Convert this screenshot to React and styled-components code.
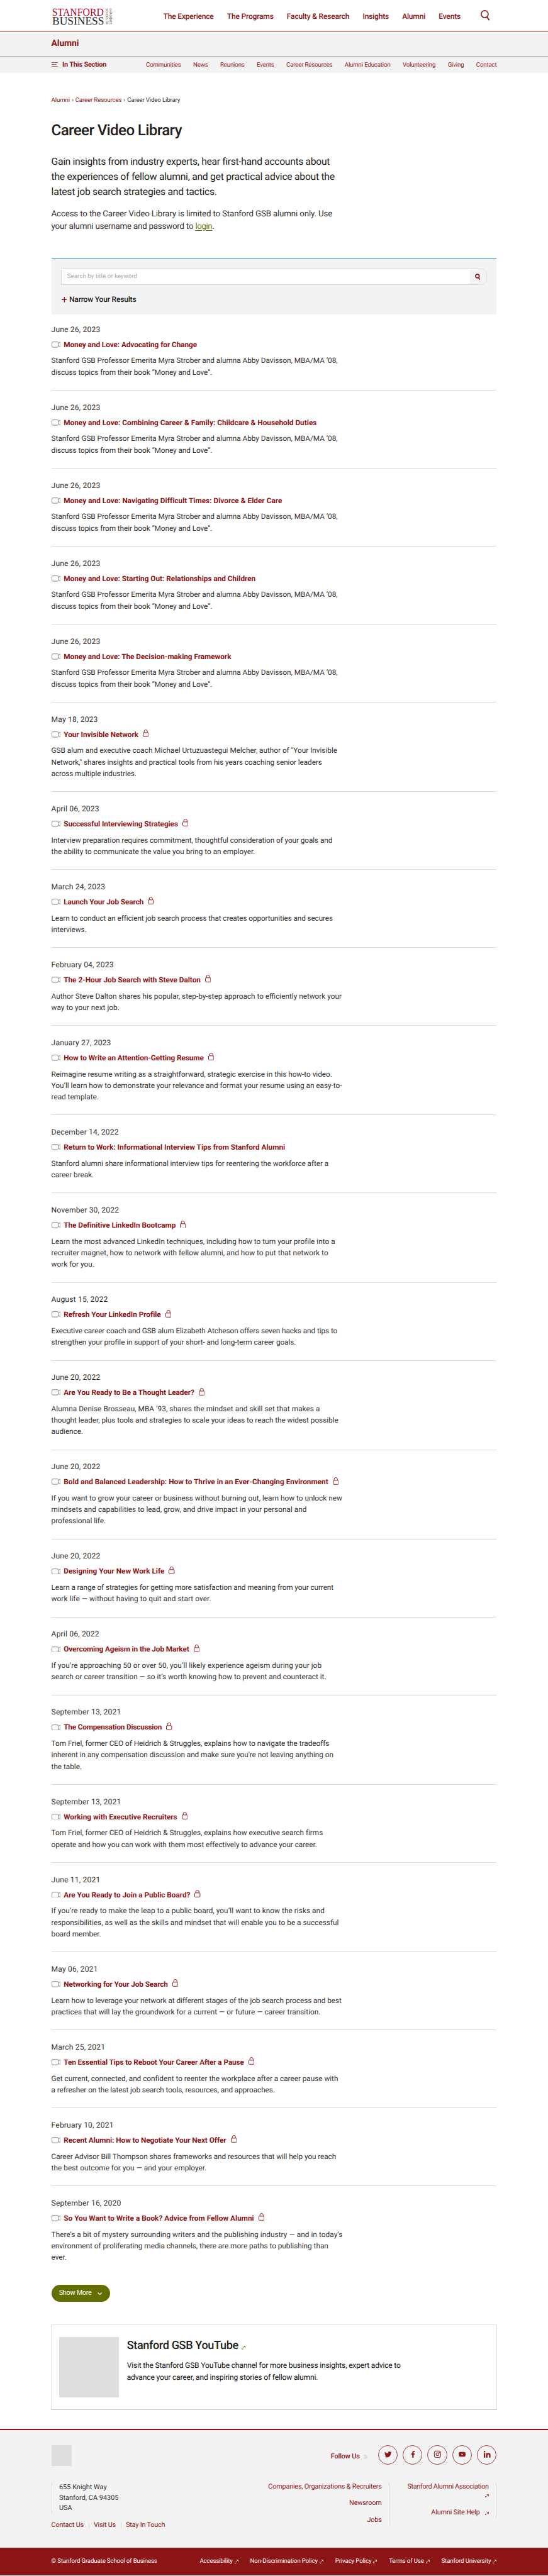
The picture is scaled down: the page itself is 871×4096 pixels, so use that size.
import React from "react";
import styled, { createGlobalStyle } from "styled-components";
import { FaTwitter, FaFacebookF, FaInstagram, FaYoutube, FaLinkedinIn } from "react-icons/fa";

const cardinal = "#8c1515";
const ink = "#231f20";
const softInk = "#343031";
const fog = "#f3f3f3";
const rule = "#dcdcdc";
const olive = "#626f00";

/* 1rem is ten design units; every measure below is written in rem. */
const GlobalStyle = createGlobalStyle`
  *, *::before, *::after { box-sizing: border-box; }
  html { font-size: 6.05px; }
  body {
    margin: 0;
    background: #fff;
    color: ${ink};
    font-family: Roboto, "Liberation Sans", Arial, sans-serif;
    font-size: 2rem;
    text-rendering: geometricPrecision;
    overflow-x: hidden;
  }
  h1, h2, h3, p, ul { margin: 0; padding: 0; font-weight: 400; }
  ul { list-style: none; }
  a { color: inherit; text-decoration: none; }
  svg { display: block; flex: none; }
`;

const Container = styled.div`
  width: 117rem;
  margin: 0 auto;
`;

/* ---------- header ---------- */

const Header = styled.header`
  height: 8.2rem;
  border-bottom: 1px solid ${cardinal};
`;

const HeaderRow = styled(Container)`
  display: flex;
  align-items: center;
  height: 100%;
  padding: 0.7rem 1.8rem 0 0.3rem;
`;

const Logo = styled.svg`
  width: 15.7rem;
  height: 4.4rem;
  overflow: visible;
`;

const MainNav = styled.nav`
  display: flex;
  gap: 3.5rem;
  margin-left: auto;
  color: ${cardinal};
  font-weight: 500;
  font-size: 2rem;
  letter-spacing: -0.018em;
  white-space: nowrap;
`;

const HeaderSearch = styled.svg`
  width: 2.4rem;
  height: 2.8rem;
  margin: -0.7rem 0 0 5.3rem;
`;

const SectionBand = styled.div`
  height: 6.9rem;
  background: ${fog};
  border-bottom: 1px solid #53565a;
`;

const SectionTitle = styled(Container)`
  display: flex;
  align-items: center;
  height: 100%;
  padding-bottom: 0.2rem;
  color: ${cardinal};
  font-weight: 700;
  font-size: 2.3rem;
  letter-spacing: -0.007em;
`;

const SubBar = styled.div`
  height: 4rem;
  background: ${fog};
`;

const SubBarRow = styled(Container)`
  display: flex;
  align-items: center;
  justify-content: space-between;
  height: 100%;
  color: ${cardinal};
`;

const InThisSection = styled.a`
  display: flex;
  align-items: center;
  gap: 1.1rem;
  padding: 0 0 0.2rem 0.15rem;
  font-weight: 700;
  font-size: 1.8rem;
  letter-spacing: -0.016em;
`;

const MenuIcon = styled.svg`
  width: 1.65rem;
  height: 1.2rem;
`;

const SubNav = styled.nav`
  display: flex;
  gap: 3.2rem;
  font-size: 1.6rem;
  letter-spacing: -0.017em;
  white-space: nowrap;
`;

/* ---------- intro ---------- */

const Main = styled(Container).attrs({ as: "main" })`
  padding-top: 6.15rem;
`;

const Breadcrumb = styled.div`
  display: flex;
  gap: 0.5rem;
  font-size: 1.6rem;
  line-height: 2.4rem;
  letter-spacing: -0.015em;
  color: ${softInk};
  a { color: ${cardinal}; }
`;

const PageTitle = styled.h1`
  margin-top: 4.27rem;
  font-weight: 500;
  font-size: 4rem;
  line-height: 4.8rem;
  letter-spacing: -0.027em;
`;

/* A line of running text with its own tracking. */
const Line = styled.span`
  display: block;
  white-space: nowrap;
  letter-spacing: ${({ $t }) => $t / 1000}em;
`;

const Lead = styled.p`
  margin-top: 3.81rem;
  font-size: 2.6rem;
  line-height: 3.96rem;
`;

const Access = styled.p`
  margin-top: 2.38rem;
  font-size: 2.2rem;
  line-height: 3.22rem;
  color: ${softInk};
`;

const LoginLink = styled.a`
  color: #6b7a10;
  text-decoration: underline;
  text-decoration-color: ${olive};
  text-decoration-thickness: 1px;
  text-underline-offset: 0.25rem;
  letter-spacing: -0.03em;
`;

/* ---------- search panel ---------- */

const SearchPanel = styled.section`
  height: 14.9rem;
  margin-top: 6.57rem;
  padding: 2.6rem;
  background: ${fog};
  border-top: 1px solid #2a84a5;
`;

const SearchField = styled.div`
  display: flex;
  height: 4.4rem;
  border: 1px solid #dadad8;
  border-radius: 0 1.6rem 1.6rem 0;
  overflow: hidden;
  background: #fff;
`;

const Placeholder = styled.div`
  flex: 1;
  display: flex;
  align-items: center;
  padding: 0 0 0.1rem 1.4rem;
  color: #a9a9a9;
  font-size: 1.6rem;
  letter-spacing: 0.005em;
`;

const SearchButton = styled.button`
  display: flex;
  align-items: center;
  width: 4.3rem;
  padding: 0 0 0 1.3rem;
  border: 0;
  background: ${fog};
  svg { width: 1.4rem; height: 1.7rem; }
`;

const Narrow = styled.h2`
  display: flex;
  align-items: center;
  gap: 0.6rem;
  margin-top: 2.62rem;
  font-weight: 500;
  font-size: 2rem;
  line-height: 2.4rem;
  letter-spacing: -0.018em;
  svg { width: 1.45rem; height: 1.45rem; margin-left: 0.05rem; }
`;

/* ---------- video list ---------- */

const VideoList = styled.ul`
  margin-top: 2.37rem;
`;

const VideoItem = styled.li`
  display: flex;
  flex-direction: column;
  padding: 2.88rem 0 calc(3.38rem - 1px);
  border-bottom: 1px solid ${rule};
  color: ${softInk};
  &:first-child { padding-top: 0; }
  &:last-child { border-bottom-color: transparent; }
`;

const VideoDate = styled.span`
  line-height: 3rem;
  letter-spacing: 0.014em;
`;

const VideoTitle = styled.h3`
  display: flex;
  align-items: center;
  height: 3rem;
  margin-top: 0.97rem;
  color: ${cardinal};
  font-weight: 700;
  font-size: 1.95rem;
  line-height: 3rem;
`;

const CameraIcon = styled.svg`
  width: 2.4rem;
  height: 1.6rem;
  margin-right: 0.85rem;
`;

const LockIcon = styled.svg`
  width: 1.55rem;
  height: 1.95rem;
  margin: -0.5rem 0 0 1.15rem;
`;

const VideoText = styled.p`
  margin-top: 1.27rem;
  font-size: 1.95rem;
  line-height: 3rem;
`;

const ShowMore = styled.button`
  display: flex;
  align-items: center;
  gap: 1.65rem;
  width: 15.4rem;
  height: 4.5rem;
  margin-top: 2.43rem;
  padding: 0 0 0.4rem 2rem;
  border: 0;
  border-radius: 2.25rem;
  background: ${olive};
  color: #fff;
  font-family: inherit;
  font-size: 1.8rem;
  letter-spacing: -0.028em;
  white-space: nowrap;
  svg { width: 1.2rem; height: 0.7rem; margin-top: 0.6rem; }
`;

/* ---------- promo card ---------- */

const Card = styled.section`
  display: flex;
  gap: 2.05rem;
  height: 22.4rem;
  margin: 5.9rem -0.1rem 0;
  padding: calc(3.3rem - 1px) 2.1rem 0 calc(2.15rem - 1px);
  border: 1px solid #e2e2e2;
  border-bottom-color: #c4c4c4;
`;

const CardImage = styled.div`
  width: 15.75rem;
  height: 15.8rem;
  background: #dedede;
`;

const CardTitle = styled.h2`
  display: flex;
  align-items: flex-end;
  gap: 0.95rem;
  margin-top: 0.48rem;
  font-weight: 500;
  font-size: 3rem;
  line-height: 3.6rem;
  letter-spacing: -0.022em;
  color: ${ink};
  svg { margin-bottom: 0.8rem; color: ${olive}; }
`;

const CardText = styled.p`
  margin-top: 1.84rem;
  font-size: 2rem;
  line-height: 3.22rem;
  color: #111;
`;

const LinkIcon = styled.svg`
  width: 1rem;
  height: 0.95rem;
`;

/* ---------- footer ---------- */

const Footer = styled.footer`
  height: 31.1rem;
  margin-top: 5.1rem;
  padding-top: 3.9rem;
  background: ${fog};
  border-top: 2px solid ${cardinal};
  color: ${cardinal};
  font-size: 1.8rem;
`;

const FooterTop = styled(Container)`
  display: flex;
  justify-content: space-between;
  height: 5.4rem;
`;

const FooterLogo = styled.div`
  width: 5.4rem;
  height: 5.4rem;
  background: #dedede;
`;

const Follow = styled.div`
  display: flex;
  align-items: center;
  height: 5.2rem;
`;

const FollowLabel = styled.span`
  display: flex;
  align-items: center;
  gap: 1.1rem;
  margin-right: 2.7rem;
  padding-top: 0.6rem;
  font-weight: 500;
  letter-spacing: -0.014em;
  svg { width: 1rem; height: 1.15rem; margin-top: 0.2rem; }
`;

const Socials = styled.div`
  display: flex;
  gap: 1.3rem;
`;

const Social = styled.a`
  display: flex;
  align-items: center;
  justify-content: center;
  width: 5.2rem;
  height: 5.2rem;
  padding: 0 0 0.3rem 0.2rem;
  border: 1px solid #a04040;
  border-radius: 50%;
  svg { width: ${({ $size }) => $size}rem; height: ${({ $size }) => $size}rem; }
`;

const FooterBody = styled(Container)`
  display: flex;
  justify-content: space-between;
  margin-top: 4.55rem;
`;

const Address = styled.address`
  height: 8.1rem;
  padding-left: calc(2.05rem - 1px);
  border-left: 1px solid rgba(0, 0, 0, 0.1);
  color: ${softInk};
  font-style: normal;
  line-height: 2.7rem;
  letter-spacing: 0.003em;
`;

const AddressLines = styled.div`
  margin-top: -0.15rem;
`;

const ContactLinks = styled.div`
  display: flex;
  align-items: center;
  margin-top: 2.35rem;
  line-height: 2.4rem;
  letter-spacing: -0.019em;
  a + a {
    margin-left: 1.3rem;
    padding-left: calc(1.35rem - 1px);
    border-left: 1px solid rgba(0, 0, 0, 0.1);
  }
  a { line-height: 1.8rem; }
`;

const FooterColumns = styled.div`
  display: flex;
  align-items: flex-start;
`;

const FooterColumn = styled.div`
  display: flex;
  flex-direction: column;
  align-items: flex-end;
  gap: 2rem;
  height: ${({ $height }) => $height}rem;
  width: ${({ $width }) => $width}rem;
  padding-right: calc(2.1rem - 1px);
  border-right: 1px solid rgba(0, 0, 0, 0.12);
  line-height: 2.34rem;
  > :first-child { margin-top: -0.15rem; }
`;

const StackedLink = styled.a`
  display: flex;
  flex-direction: column;
  align-items: flex-end;
  letter-spacing: -0.03em;
  svg { margin: 0.7rem 0 0.69rem; }
`;

const InlineLink = styled.a`
  display: flex;
  align-items: center;
  gap: 1.3rem;
  letter-spacing: ${({ $t = -14 }) => $t / 1000}em;
  svg { margin-top: 0.6rem; }
`;

const LegalBar = styled.div`
  height: 7.42rem;
  background: ${cardinal};
  color: #fff;
`;

const LegalRow = styled(Container)`
  display: flex;
  align-items: center;
  justify-content: space-between;
  height: 100%;
  padding-bottom: 0.3rem;
  font-size: 1.6rem;
  letter-spacing: -0.0145em;
`;

const LegalLinks = styled.nav`
  display: flex;
  gap: 3.1rem;
  white-space: nowrap;
  a { display: flex; align-items: center; gap: 0.5rem; }
  svg { margin-top: 0.4rem; }
`;

/* ---------- data ---------- */

const sections = ["The Experience", "The Programs", "Faculty & Research", "Insights", "Alumni", "Events"];
const alumniPages = ["Communities", "News", "Reunions", "Events", "Career Resources", "Alumni Education", "Volunteering", "Giving", "Contact"];
const legal = ["Accessibility", "Non-Discrimination Policy", "Privacy Policy", "Terms of Use", "Stanford University"];

const moneyAndLove = [
  ["Stanford GSB Professor Emerita Myra Strober and alumna Abby Davisson, MBA/MA ’08,", -2],
  ["discuss topics from their book “Money and Love”.", -5],
];

/* date, title, title tracking, locked, [line, tracking] */
const videos = [
  ["June 26, 2023", "Money and Love: Advocating for Change", -5, false, moneyAndLove],
  ["June 26, 2023", "Money and Love: Combining Career & Family: Childcare & Household Duties", 2, false, moneyAndLove],
  ["June 26, 2023", "Money and Love: Navigating Difficult Times: Divorce & Elder Care", 3, false, moneyAndLove],
  ["June 26, 2023", "Money and Love: Starting Out: Relationships and Children", 0, false, moneyAndLove],
  ["June 26, 2023", "Money and Love: The Decision-making Framework", -2, false, moneyAndLove],
  ["May 18, 2023", "Your Invisible Network", -2, true, [
    ["GSB alum and executive coach Michael Urtuzuastegui Melcher, author of \"Your Invisible", -1],
    ["Network,\" shares insights and practical tools from his years coaching senior leaders", -6],
    ["across multiple industries.", -9],
  ]],
  ["April 06, 2023", "Successful Interviewing Strategies", -6, true, [
    ["Interview preparation requires commitment, thoughtful consideration of your goals and", -6],
    ["the ability to communicate the value you bring to an employer.", 1],
  ]],
  ["March 24, 2023", "Launch Your Job Search", -6, true, [
    ["Learn to conduct an efficient job search process that creates opportunities and secures", -9],
    ["interviews.", -2],
  ]],
  ["February 04, 2023", "The 2-Hour Job Search with Steve Dalton", -1, true, [
    ["Author Steve Dalton shares his popular, step-by-step approach to efficiently network your", 0],
    ["way to your next job.", 4],
  ]],
  ["January 27, 2023", "How to Write an Attention-Getting Resume", -6, true, [
    ["Reimagine resume writing as a straightforward, strategic exercise in this how-to video.", -3],
    ["You’ll learn how to demonstrate your relevance and format your resume using an easy-to-", -2],
    ["read template.", -2],
  ]],
  ["December 14, 2022", "Return to Work: Informational Interview Tips from Stanford Alumni", 0, false, [
    ["Stanford alumni share informational interview tips for reentering the workforce after a", -6],
    ["career break.", -4],
  ]],
  ["November 30, 2022", "The Definitive LinkedIn Bootcamp", -2, true, [
    ["Learn the most advanced LinkedIn techniques, including how to turn your profile into a", 2],
    ["recruiter magnet, how to network with fellow alumni, and how to put that network to", 5],
    ["work for you.", 3],
  ]],
  ["August 15, 2022", "Refresh Your LinkedIn Profile", -2, true, [
    ["Executive career coach and GSB alum Elizabeth Atcheson offers seven hacks and tips to", -6],
    ["strengthen your profile in support of your short- and long-term career goals.", -5],
  ]],
  ["June 20, 2022", "Are You Ready to Be a Thought Leader?", -3, true, [
    ["Alumna Denise Brosseau, MBA ’93, shares the mindset and skill set that makes a", 6],
    ["thought leader, plus tools and strategies to scale your ideas to reach the widest possible", -3],
    ["audience.", -2],
  ]],
  ["June 20, 2022", "Bold and Balanced Leadership: How to Thrive in an Ever-Changing Environment", 2, true, [
    ["If you want to grow your career or business without burning out, learn how to unlock new", 1],
    ["mindsets and capabilities to lead, grow, and drive impact in your personal and", 2],
    ["professional life.", -2],
  ]],
  ["June 20, 2022", "Designing Your New Work Life", 1, true, [
    ["Learn a range of strategies for getting more satisfaction and meaning from your current", -8],
    ["work life — without having to quit and start over.", 7],
  ]],
  ["April 06, 2022", "Overcoming Ageism in the Job Market", -9, true, [
    ["If you’re approaching 50 or over 50, you’ll likely experience ageism during your job", 5],
    ["search or career transition — so it’s worth knowing how to prevent and counteract it.", 0],
  ]],
  ["September 13, 2021", "The Compensation Discussion", -16, true, [
    ["Tom Friel, former CEO of Heidrich & Struggles, explains how to navigate the tradeoffs", -1],
    ["inherent in any compensation discussion and make sure you're not leaving anything on", -3],
    ["the table.", -2],
  ]],
  ["September 13, 2021", "Working with Executive Recruiters", -1, true, [
    ["Tom Friel, former CEO of Heidrich & Struggles, explains how executive search firms", -1],
    ["operate and how you can work with them most effectively to advance your career.", -3],
  ]],
  ["June 11, 2021", "Are You Ready to Join a Public Board?", -2, true, [
    ["If you’re ready to make the leap to a public board, you’ll want to know the risks and", 6],
    ["responsibilities, as well as the skills and mindset that will enable you to be a successful", 2],
    ["board member.", -2],
  ]],
  ["May 06, 2021", "Networking for Your Job Search", -10, true, [
    ["Learn how to leverage your network at different stages of the job search process and best", -6],
    ["practices that will lay the groundwork for a current — or future — career transition.", 3],
  ]],
  ["March 25, 2021", "Ten Essential Tips to Reboot Your Career After a Pause", -7, true, [
    ["Get current, connected, and confident to reenter the workplace after a career pause with", -2],
    ["a refresher on the latest job search tools, resources, and approaches.", -6],
  ]],
  ["February 10, 2021", "Recent Alumni: How to Negotiate Your Next Offer", -4, true, [
    ["Career Advisor Bill Thompson shares frameworks and resources that will help you reach", -6],
    ["the best outcome for you — and your employer.", 3],
  ]],
  ["September 16, 2020", "So You Want to Write a Book? Advice from Fellow Alumni", 2, true, [
    ["There’s a bit of mystery surrounding writers and the publishing industry — and in today’s", 6],
    ["environment of proliferating media channels, there are more paths to publishing than", -1],
    ["ever.", -2],
  ]],
];

/* ---------- drawings ---------- */

const Camera = () => (
  <CameraIcon viewBox="0 0 24 16" fill="none" stroke="#9f9f9f" strokeWidth="1.9" strokeLinejoin="round">
    <rect x="1" y="1" width="16.4" height="14" rx="2.6" />
    <path d="M17.4 5.2 22.2 1.6Q23 1.2 23 2.2V13.8Q23 14.8 22.2 14.2L17.4 10.6" />
  </CameraIcon>
);

const Lock = () => (
  <LockIcon viewBox="0 0 15.5 19.5" fill="none" stroke={cardinal} strokeWidth="1.6">
    <rect x="0.8" y="8" width="13.9" height="10.7" rx="1.8" />
    <path d="M3.5 8V5a4.25 4.25 0 0 1 8.5 0v3" />
  </LockIcon>
);

const External = () => (
  <LinkIcon viewBox="0 0 10 9.5" fill="none" stroke="currentColor" strokeWidth="1.35">
    <path d="M3.6 6.2 9 .9M4.4.7h4.9v4.9M.7 5v3.8h3.6" />
  </LinkIcon>
);

const StanfordLogo = () => (
  <Logo viewBox="0 0 157 44" fontFamily='"Liberation Serif", serif'>
    <text x="-0.5" y="19.5" fontSize="28.5" textLength="136" lengthAdjust="spacingAndGlyphs" fill="#b1042c">STANFORD</text>
    <text x="0" y="43.5" fontSize="29.5" textLength="136.5" lengthAdjust="spacingAndGlyphs" fill={ink}>BUSINESS</text>
    <g fontFamily='"Liberation Sans", sans-serif' fontSize="8.8" fill="#4c4949">
      <text transform="translate(150 .4) rotate(90)" textLength="43" lengthAdjust="spacingAndGlyphs">GRADUATE</text>
      <text transform="translate(140.4 .4) rotate(90)" textLength="43" lengthAdjust="spacingAndGlyphs">SCHOOL OF</text>
    </g>
  </Logo>
);

export default function App() {
  return (
    <>
      <GlobalStyle />
      <Header>
        <HeaderRow>
          <StanfordLogo />
          <MainNav>
            {sections.map((s) => <a key={s}>{s}</a>)}
          </MainNav>
          <HeaderSearch viewBox="0 0 24 28" fill="none" stroke={cardinal} strokeWidth="2.6">
            <circle cx="10.6" cy="10.6" r="9.2" />
            <path d="M16.5 18.2 22.6 27" strokeWidth="3" />
          </HeaderSearch>
        </HeaderRow>
      </Header>
      <SectionBand>
        <SectionTitle>Alumni</SectionTitle>
      </SectionBand>
      <SubBar>
        <SubBarRow>
          <InThisSection>
            <MenuIcon viewBox="0 0 16.5 12" stroke={cardinal} strokeWidth="1.3">
              <path d="M0 .9h16.5M0 6h13M0 11.1h16.5" />
            </MenuIcon>
            In This Section
          </InThisSection>
          <SubNav>
            {alumniPages.map((p) => <a key={p}>{p}</a>)}
          </SubNav>
        </SubBarRow>
      </SubBar>

      <Main>
        <Breadcrumb>
          <a>Alumni</a><span>›</span><a>Career Resources</a><span>›</span><span>Career Video Library</span>
        </Breadcrumb>
        <PageTitle>Career Video Library</PageTitle>
        <Lead>
          <Line $t={-22}>Gain insights from industry experts, hear first-hand accounts about</Line>
          <Line $t={-17}>the experiences of fellow alumni, and get practical advice about the</Line>
          <Line $t={-17}>latest job search strategies and tactics.</Line>
        </Lead>
        <Access>
          <Line $t={-11}>Access to the Career Video Library is limited to Stanford GSB alumni only. Use</Line>
          <Line $t={-15}>your alumni username and password to <LoginLink>login</LoginLink>.</Line>
        </Access>

        <SearchPanel>
          <SearchField>
            <Placeholder>Search by title or keyword</Placeholder>
            <SearchButton aria-label="Search">
              <svg viewBox="0 0 14 17" fill="none" stroke={cardinal} strokeWidth="2.8">
                <circle cx="6.2" cy="6.6" r="4.8" />
                <path d="M9.2 10.8 13 16" />
              </svg>
            </SearchButton>
          </SearchField>
          <Narrow>
            <svg viewBox="0 0 14 14" stroke={cardinal} strokeWidth="2.2">
              <path d="M7 0v14M0 7h14" />
            </svg>
            Narrow Your Results
          </Narrow>
        </SearchPanel>

        <VideoList>
          {videos.map(([date, title, track, locked, lines]) => (
            <VideoItem key={title}>
              <VideoDate>{date}</VideoDate>
              <VideoTitle>
                <Camera />
                <Line $t={track}>{title}</Line>
                {locked && <Lock />}
              </VideoTitle>
              <VideoText>
                {lines.map(([text, t]) => <Line key={text} $t={t}>{text}</Line>)}
              </VideoText>
            </VideoItem>
          ))}
        </VideoList>

        <ShowMore>
          Show More
          <svg viewBox="0 0 12 7" fill="none" stroke="#fff" strokeWidth="1.9">
            <path d="M.8.8 6 5.8 11.2.8" />
          </svg>
        </ShowMore>

        <Card>
          <CardImage />
          <div>
            <CardTitle>Stanford GSB YouTube <External /></CardTitle>
            <CardText>
              <Line $t={-16}>Visit the Stanford GSB YouTube channel for more business insights, expert advice to</Line>
              <Line $t={-14}>advance your career, and inspiring stories of fellow alumni.</Line>
            </CardText>
          </div>
        </Card>
      </Main>

      <Footer>
        <FooterTop>
          <FooterLogo />
          <Follow>
            <FollowLabel>
              Follow Us
              <svg viewBox="0 0 10 11.5" fill="none" stroke="#adadad" strokeWidth="1.3">
                <path d="M.6.6 5 5.75.6 10.9M5 .6 9.3 5.75 5 10.9" />
              </svg>
            </FollowLabel>
            <Socials>
              <Social $size={1.9} aria-label="Twitter"><FaTwitter /></Social>
              <Social $size={1.8} aria-label="Facebook"><FaFacebookF /></Social>
              <Social $size={2.1} aria-label="Instagram"><FaInstagram /></Social>
              <Social $size={1.85} aria-label="YouTube"><FaYoutube /></Social>
              <Social $size={2.05} aria-label="LinkedIn"><FaLinkedinIn /></Social>
            </Socials>
          </Follow>
        </FooterTop>
        <FooterBody>
          <div>
            <Address>
              <AddressLines>655 Knight Way<br />Stanford, CA 94305<br />USA</AddressLines>
            </Address>
            <ContactLinks>
              <a>Contact Us</a><a>Visit Us</a><a>Stay In Touch</a>
            </ContactLinks>
          </div>
          <FooterColumns>
            <FooterColumn $width={40} $height={11.02}>
              <InlineLink $t={-19}>Companies, Organizations &amp; Recruiters</InlineLink>
              <InlineLink>Newsroom</InlineLink>
              <InlineLink>Jobs</InlineLink>
            </FooterColumn>
            <FooterColumn $width={28.1} $height={9.02}>
              <StackedLink>Stanford Alumni Association<External /></StackedLink>
              <InlineLink>Alumni Site Help<External /></InlineLink>
            </FooterColumn>
          </FooterColumns>
        </FooterBody>
      </Footer>
      <LegalBar>
        <LegalRow>
          <span>© Stanford Graduate School of Business</span>
          <LegalLinks>
            {legal.map((l) => <a key={l}>{l}<External /></a>)}
          </LegalLinks>
        </LegalRow>
      </LegalBar>
    </>
  );
}
